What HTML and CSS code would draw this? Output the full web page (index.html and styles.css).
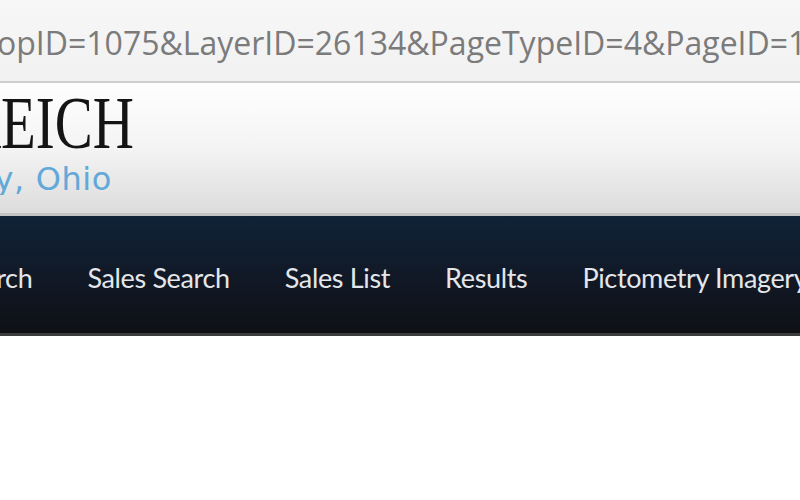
FILE: index.html
```html
<!DOCTYPE html>
<html>
<head>
<meta charset="utf-8">
<link rel="stylesheet" href="styles.css">
</head>
<body>
<div class="urlbar"><span class="url">opID=1075&amp;LayerID=26134&amp;PageTypeID=4&amp;PageID=1075</span></div>
<div class="header">
  <div class="logo">
    <div class="logo-name"><span>REICH</span></div>
    <div class="logo-sub">County, Ohio</div>
  </div>
</div>
<nav class="nav">
  <ul class="menu">
    <li class="first">Search</li>
    <li>Sales Search</li>
    <li>Sales List</li>
    <li>Results</li>
    <li>Pictometry Imagery</li>
  </ul>
</nav>
<div class="content"></div>
</body>
</html>
```

FILE: styles.css
```css
html, body {
  margin: 0;
  padding: 0;
  background: #ffffff;
  overflow: hidden;
  width: 800px;
  height: 500px;
}
.urlbar {
  height: 81px;
  background: linear-gradient(#f7f7f7, #f1f1f1);
  border-bottom: 2px solid #cfcfcf;
  display: flex;
  align-items: center;
  white-space: nowrap;
  overflow: hidden;
}
.url {
  font-family: "Open Sans", "DejaVu Sans", sans-serif;
  font-size: 32px;
  color: #7b7b7b;
  margin-left: -3px;
  margin-top: 4px;
  letter-spacing: 0;
}
.header {
  height: 130px;
  background: linear-gradient(#fefefe 0%, #f4f4f4 50%, #dcdcdc 100%);
  border-bottom: 3px solid #c4c4c4;
  overflow: hidden;
}
.logo {
  display: flex;
  flex-direction: column;
  align-items: flex-end;
  width: 134px;
  overflow: hidden;
}
.logo-name {
  font-family: "Liberation Serif", "Times New Roman", serif;
  font-size: 57px;
  color: #141414;
  line-height: 1;
  white-space: nowrap;
  height: 70px;
  display: flex;
  align-items: center;
  padding-top: 4px;
}
.logo-name span {
  display: inline-block;
  transform: scaleY(1.3);
  transform-origin: center;
}
.logo-sub {
  font-family: "DejaVu Sans", sans-serif;
  font-size: 32px;
  color: #62a8d8;
  white-space: nowrap;
  line-height: 1;
  margin-top: 6px;
  margin-right: 22px;
  letter-spacing: 0.6px;
}
.nav {
  height: 117px;
  background: linear-gradient(#0f2337 0%, #111a29 45%, #0f1015 100%);
  border-bottom: 3px solid #3a3d3c;
  overflow: hidden;
}
.menu {
  list-style: none;
  margin: 0;
  padding: 0;
  display: flex;
  gap: 55px;
  height: 100%;
  align-items: center;
  white-space: nowrap;
  padding-top: 6px;
  box-sizing: border-box;
}
.menu li {
  font-family: "Lato", "Open Sans", sans-serif;
  font-size: 27px;
  color: #e4e6e9;
  letter-spacing: -0.35px;
}
.menu li.first {
  margin-left: -45px;
}
.content {
  height: 150px;
}
```
